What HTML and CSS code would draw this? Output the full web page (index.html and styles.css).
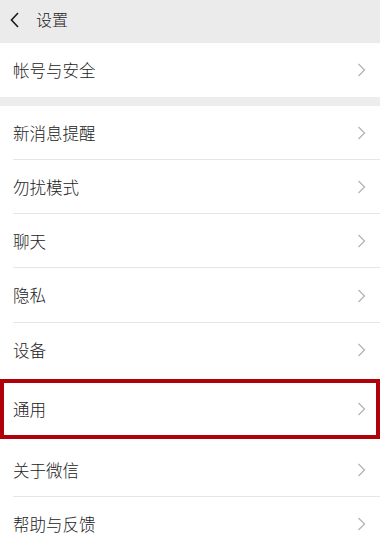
FILE: index.html
```html
<!DOCTYPE html>
<html lang="zh">
<head>
<meta charset="utf-8">
<link rel="stylesheet" href="styles.css">
</head>
<body>
<div class="page">
  <header class="topbar">
    <svg class="back" width="12" height="16" viewBox="0 0 12 16"><path d="M9 1 L2.5 8 L9 15" fill="none" stroke="#1a1a1a" stroke-width="1.6"/></svg>
    <span class="title">设置</span>
  </header>
  <section class="group first">
    <div class="row"><span class="label">帐号与安全</span><svg class="chev" width="9" height="14" viewBox="0 0 9 14"><path d="M1.5 1 L7.5 7 L1.5 13" fill="none" stroke="#b4b4b4" stroke-width="1.3"/></svg></div>
  </section>
  <section class="group">
    <div class="row sep"><span class="label">新消息提醒</span><svg class="chev" width="9" height="14" viewBox="0 0 9 14"><path d="M1.5 1 L7.5 7 L1.5 13" fill="none" stroke="#b4b4b4" stroke-width="1.3"/></svg></div>
    <div class="row sep"><span class="label">勿扰模式</span><svg class="chev" width="9" height="14" viewBox="0 0 9 14"><path d="M1.5 1 L7.5 7 L1.5 13" fill="none" stroke="#b4b4b4" stroke-width="1.3"/></svg></div>
    <div class="row sep"><span class="label">聊天</span><svg class="chev" width="9" height="14" viewBox="0 0 9 14"><path d="M1.5 1 L7.5 7 L1.5 13" fill="none" stroke="#b4b4b4" stroke-width="1.3"/></svg></div>
    <div class="row sep tall"><span class="label">隐私</span><svg class="chev" width="9" height="14" viewBox="0 0 9 14"><path d="M1.5 1 L7.5 7 L1.5 13" fill="none" stroke="#b4b4b4" stroke-width="1.3"/></svg></div>
    <div class="row"><span class="label">设备</span><svg class="chev" width="9" height="14" viewBox="0 0 9 14"><path d="M1.5 1 L7.5 7 L1.5 13" fill="none" stroke="#b4b4b4" stroke-width="1.3"/></svg></div>
    <div class="highlight">
      <div class="row inner"><span class="label">通用</span><svg class="chev" width="9" height="14" viewBox="0 0 9 14"><path d="M1.5 1 L7.5 7 L1.5 13" fill="none" stroke="#b4b4b4" stroke-width="1.3"/></svg></div>
    </div>
    <div class="row sep after"><span class="label">关于微信</span><svg class="chev" width="9" height="14" viewBox="0 0 9 14"><path d="M1.5 1 L7.5 7 L1.5 13" fill="none" stroke="#b4b4b4" stroke-width="1.3"/></svg></div>
    <div class="row"><span class="label">帮助与反馈</span><svg class="chev" width="9" height="14" viewBox="0 0 9 14"><path d="M1.5 1 L7.5 7 L1.5 13" fill="none" stroke="#b4b4b4" stroke-width="1.3"/></svg></div>
  </section>
</div>
</body>
</html>
```

FILE: styles.css
```css
html, body {
  margin: 0;
  padding: 0;
  background: #ededed;
}
body {
  font-family: "Noto Sans CJK SC", "Noto Sans", sans-serif;
  font-weight: 300;
  color: #222222;
  width: 380px;
  height: 550px;
  overflow: hidden;
}
.page {
  display: flex;
  flex-direction: column;
}
.topbar {
  height: 43px;
  background: #ebebeb;
  display: flex;
  align-items: center;
  padding-left: 9px;
  box-sizing: border-box;
}
.back {
  margin-top: -3px;
}
.title {
  font-size: 16px;
  margin-left: 15px;
  margin-top: -5px;
  color: #222222;
}
.group {
  background: #ffffff;
  display: flex;
  flex-direction: column;
}
.group.first {
  margin-bottom: 9px;
}
.row {
  height: 54px;
  box-sizing: border-box;
  display: flex;
  align-items: center;
  justify-content: space-between;
  padding-left: 13px;
  padding-right: 14px;
  position: relative;
}
.row.tall {
  height: 55px;
}
.row.sep::after {
  content: "";
  position: absolute;
  left: 13px;
  right: 0;
  bottom: 0;
  height: 1px;
  background: #e6e6e6;
}
.label {
  font-size: 16.5px;
  line-height: 1;
  color: #222222;
}
.highlight {
  margin-top: 2px;
  border: 4px solid #b0000a;
  height: 60px;
  box-sizing: border-box;
}
.row.inner {
  height: 52px;
  padding-left: 9px;
  padding-right: 10px;
}
.row.after {
  margin-top: 4px;
}
```
